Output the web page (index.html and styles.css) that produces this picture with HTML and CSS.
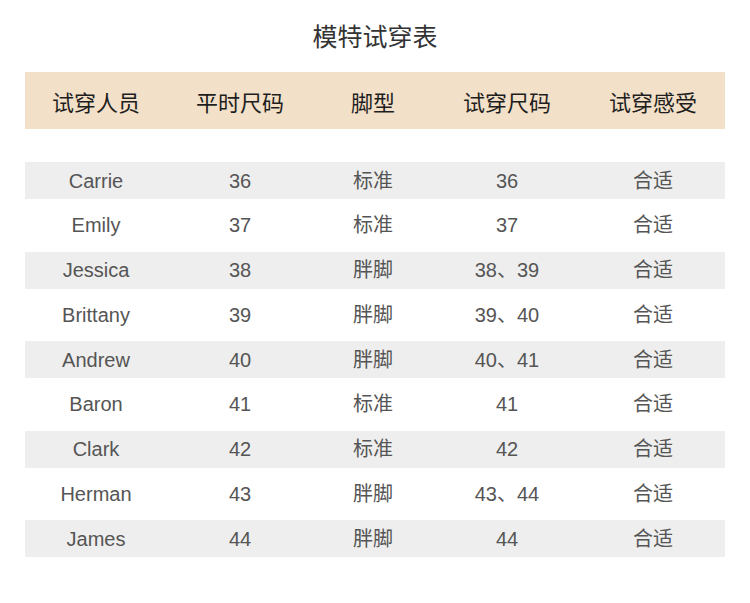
FILE: index.html
```html
<!DOCTYPE html>
<html lang="zh">
<head>
<meta charset="utf-8">
<title>模特试穿表</title>
<link rel="stylesheet" href="styles.css">
</head>
<body>
<div class="page">
  <h1 class="title">模特试穿表</h1>
  <div class="table">
    <div class="row head">
      <div class="c c1">试穿人员</div>
      <div class="c c2">平时尺码</div>
      <div class="c c3">脚型</div>
      <div class="c c4">试穿尺码</div>
      <div class="c c5">试穿感受</div>
    </div>
    <div class="body">
      <div class="row odd"><div class="c c1">Carrie</div><div class="c c2">36</div><div class="c c3">标准</div><div class="c c4">36</div><div class="c c5">合适</div></div>
      <div class="row even"><div class="c c1">Emily</div><div class="c c2">37</div><div class="c c3">标准</div><div class="c c4">37</div><div class="c c5">合适</div></div>
      <div class="row odd"><div class="c c1">Jessica</div><div class="c c2">38</div><div class="c c3">胖脚</div><div class="c c4">38、39</div><div class="c c5">合适</div></div>
      <div class="row even"><div class="c c1">Brittany</div><div class="c c2">39</div><div class="c c3">胖脚</div><div class="c c4">39、40</div><div class="c c5">合适</div></div>
      <div class="row odd"><div class="c c1">Andrew</div><div class="c c2">40</div><div class="c c3">胖脚</div><div class="c c4">40、41</div><div class="c c5">合适</div></div>
      <div class="row even"><div class="c c1">Baron</div><div class="c c2">41</div><div class="c c3">标准</div><div class="c c4">41</div><div class="c c5">合适</div></div>
      <div class="row odd"><div class="c c1">Clark</div><div class="c c2">42</div><div class="c c3">标准</div><div class="c c4">42</div><div class="c c5">合适</div></div>
      <div class="row even"><div class="c c1">Herman</div><div class="c c2">43</div><div class="c c3">胖脚</div><div class="c c4">43、44</div><div class="c c5">合适</div></div>
      <div class="row odd"><div class="c c1">James</div><div class="c c2">44</div><div class="c c3">胖脚</div><div class="c c4">44</div><div class="c c5">合适</div></div>
    </div>
  </div>
</div>
</body>
</html>
```

FILE: styles.css
```css
html, body {
  margin: 0;
  padding: 0;
  background: #ffffff;
}
body {
  font-family: "Liberation Sans", "Noto Sans CJK SC", sans-serif;
  width: 750px;
  height: 603px;
  overflow: hidden;
}
.page {
  padding: 20px 25px 0 25px;
}
.title {
  margin: 0;
  height: 30px;
  line-height: 30px;
  font-size: 25px;
  font-weight: normal;
  text-align: center;
  color: #333333;
  font-family: "Noto Sans CJK SC", sans-serif;
}
.table {
  margin-top: 22px;
  width: 700px;
}
.row {
  display: flex;
  align-items: center;
}
.head {
  height: 57px;
  background: #f3e0c8;
  color: #1e1e1e;
  font-size: 22px;
  font-family: "Noto Sans CJK SC", sans-serif;
}
.body {
  margin-top: 33px;
  font-size: 20px;
  color: #555555;
}
.odd {
  height: 37px;
  background: #eeeeee;
}
.even {
  height: 52.5px;
}
.c {
  text-align: center;
  line-height: 24px;
}
.c1 { width: 142px; }
.c2 { width: 146px; }
.c3 { width: 120px; }
.c4 { width: 148px; }
.c5 { width: 144px; }
```
